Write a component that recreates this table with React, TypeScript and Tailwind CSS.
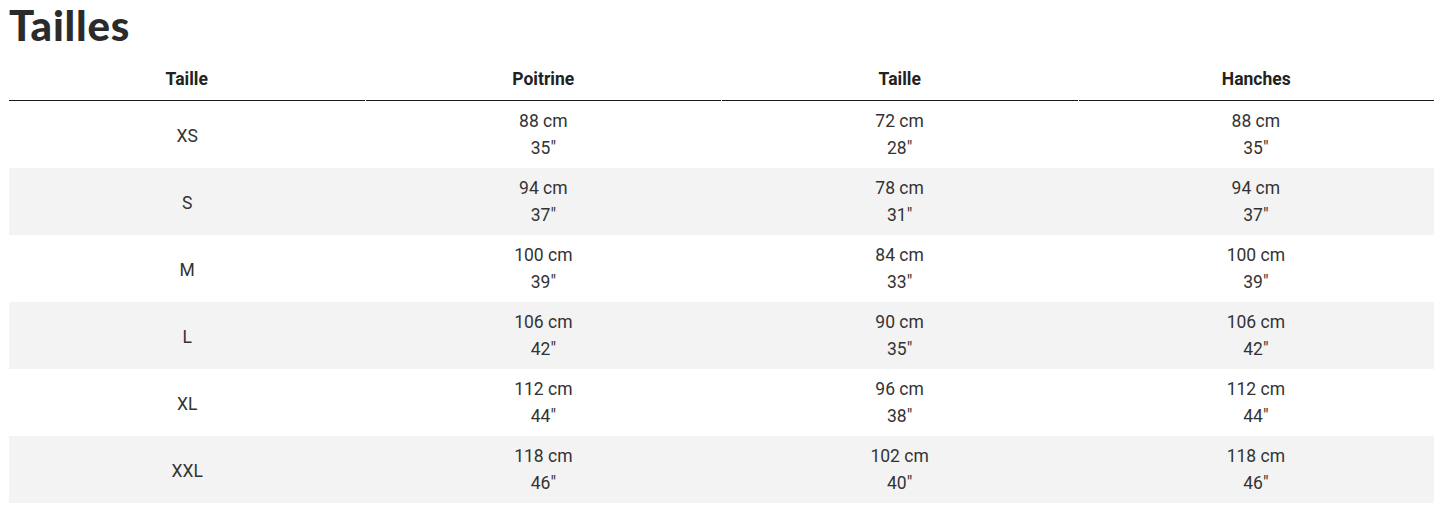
import React from "react";

const rows = [
  ["XS", "88 cm", "35\"", "72 cm", "28\"", "88 cm", "35\""],
  ["S", "94 cm", "37\"", "78 cm", "31\"", "94 cm", "37\""],
  ["M", "100 cm", "39\"", "84 cm", "33\"", "100 cm", "39\""],
  ["L", "106 cm", "42\"", "90 cm", "35\"", "106 cm", "42\""],
  ["XL", "112 cm", "44\"", "96 cm", "38\"", "112 cm", "44\""],
  ["XXL", "118 cm", "46\"", "102 cm", "40\"", "118 cm", "46\""],
];

const headers = ["Taille", "Poitrine", "Taille", "Hanches"];

export default function App() {
  return (
    <div className="bg-white min-h-[514px] pl-[9px] pt-px text-[#333]" style={{ fontFamily: "Roboto, 'Liberation Sans', sans-serif" }}>
      <h1
        className="text-[42px] leading-[48px] font-black text-[#2b2b2b] mb-[9px] tracking-[0.8px]"
        style={{ fontFamily: "Lato, 'DejaVu Sans', sans-serif" }}
      >
        Tailles
      </h1>
      <div className="w-[1425px]">
        <div className="grid grid-cols-4 gap-x-px">
          {headers.map((h, i) => (
            <div
              key={i}
              className="h-[43px] flex items-center justify-center border-b border-[#1a1a1a] font-bold text-[17.5px] text-[#222]"
            >
              {h}
            </div>
          ))}
        </div>
        {rows.map((r, i) => (
          <div key={i} className={`grid grid-cols-4 h-[67px] text-[17.5px] leading-[27px] ${i % 2 === 1 ? "bg-[#f3f3f3]" : "bg-white"}`}>
            <div className="flex items-center justify-center pt-[4px]">{r[0]}</div>
            {[1, 3, 5].map((j) => (
              <div key={j} className="flex flex-col items-center justify-center">
                <span>{r[j]}</span>
                <span>{r[j + 1]}</span>
              </div>
            ))}
          </div>
        ))}
      </div>
    </div>
  );
}
